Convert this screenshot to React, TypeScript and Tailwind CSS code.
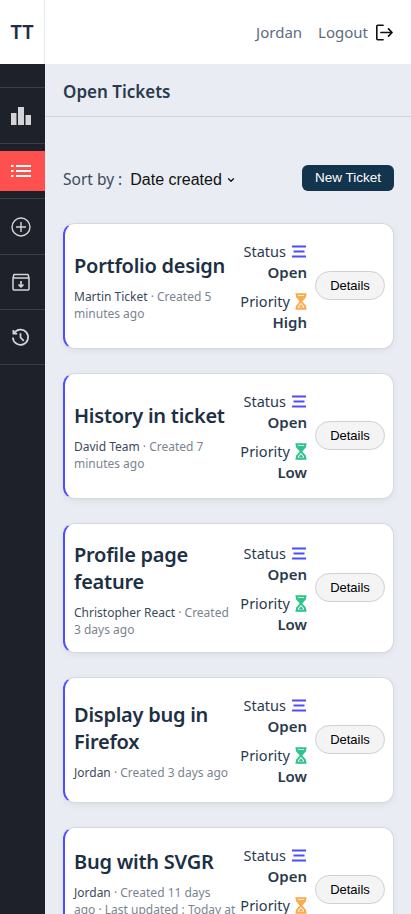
import { ChevronDown } from 'lucide-react'

const tickets = [
  { title: 'Portfolio design', author: 'Martin Ticket', meta: ' · Created 5 minutes ago', priority: 'High', h: 'h-[126px]' },
  { title: 'History in ticket', author: 'David Team', meta: ' · Created 7 minutes ago', priority: 'Low', h: 'h-[126px]' },
  { title: 'Profile page feature', author: 'Christopher React', meta: ' · Created 3 days ago', priority: 'Low', h: 'h-[130px]' },
  { title: 'Display bug in Firefox', author: 'Jordan', meta: ' · Created 3 days ago', priority: 'Low', h: 'h-[126px]' },
  { title: 'Bug with SVGR', author: 'Jordan', meta: ' · Created 11 days\nago · Last updated : Today at\n10:12', priority: 'High', h: 'h-[126px]' },
]

function BarsIcon() {
  return (
    <svg viewBox="0 0 16 13" className="w-4 h-[13px]">
      <path d="M1 1.5h14M2.5 6.5h11M1 11.5h14" stroke="#4d4dff" strokeWidth="2" fill="none" />
    </svg>
  )
}

function HourglassIcon({ color }: { color: string }) {
  return (
    <svg viewBox="0 0 12 17" className="w-3 h-[17px]">
      <path d="M0.5 1.2h11M0.5 15.8h11M2 1.2v2.6l3.8 4.7-3.8 4.7v2.6M10 1.2v2.6L6.2 8.5 10 13.2v2.6" stroke={color} strokeWidth="1.9" fill="none" />
      <path d="M3 3h6v1L6 8 3 4zM3.5 14.5 6 11l2.5 3.5z" fill={color} />
    </svg>
  )
}

function TicketCard({ t }: { t: (typeof tickets)[number] }) {
  const color = t.priority === 'High' ? '#fba94c' : '#2fc18c'
  return (
    <div className={`${t.h} shrink-0 flex items-center bg-white rounded-xl border border-[#d6d8dc] border-l-2 border-l-[#4d4dff] pl-[9px] pr-2 shadow-[0_2px_6px_rgba(0,0,0,0.06)]`}>
      <div className="flex-1 min-w-0 pt-[2px] pr-[2px]">
        <h2 className="text-[20px] leading-[27px] font-semibold tracking-[-0.25px] text-[#1c2f44]">{t.title}</h2>
        <p className="mt-[9px] text-[12px] leading-[17px] text-[#7a8490] whitespace-pre-line">
          <span className="text-[#3d4a5a]">{t.author}</span>
          {t.meta}
        </p>
      </div>
      <div className="w-[68px] shrink-0 pt-[1px] flex flex-col items-end text-[#2a3a4d] whitespace-nowrap">
        <div className="flex items-center gap-[5px] text-[14.5px] leading-[21px]">Status <BarsIcon /></div>
        <div className="text-[15px] leading-[21px] font-semibold">Open</div>
        <div className="mt-[8px] flex items-center gap-[5px] text-[14.5px] leading-[21px]">Priority <HourglassIcon color={color} /></div>
        <div className="text-[15px] leading-[21px] font-semibold">{t.priority}</div>
      </div>
      <button className="ml-2 mb-[1px] w-[70px] h-[29px] shrink-0 rounded-full bg-[#f4f4f5] border border-[#cfd0d3] text-[13px] text-black font-['Liberation_Sans',sans-serif]">
        Details
      </button>
    </div>
  )
}

export default function App() {
  return (
    <div className="h-[914px] overflow-hidden flex flex-col bg-[#e9ecf2] font-['Noto_Sans',sans-serif]">
      <header className="h-16 shrink-0 flex items-center bg-white">
        <div className="w-[45px] h-full flex items-center justify-center border-r border-[#e8e9ec] text-[20px] font-semibold text-[#1c2f44]">TT</div>
        <div className="flex-1 flex items-center justify-end gap-4 pr-[18px] text-[15px] text-[#5d6b7d]">
          <span>Jordan</span>
          <span className="flex items-center gap-[7px]">
            Logout
            <svg viewBox="0 0 20 20" className="w-[18px] h-[19px]" fill="none" stroke="#111" strokeWidth="1.8" strokeLinecap="round" strokeLinejoin="round">
              <path d="M9 2H3a1 1 0 0 0-1 1v14a1 1 0 0 0 1 1h6M6.5 10h12.5M15 6l4 4-4 4" />
            </svg>
          </span>
        </div>
      </header>

      <div className="flex-1 flex min-h-0">
        <nav className="w-[45px] shrink-0 bg-[#1e212a] pt-[23px] text-[#d4d4d8]">
          <div className="h-[56px] flex items-center justify-center pr-1 border-t border-[#3b3e46]">
            <svg viewBox="0 0 20 18" className="w-5 h-[18px]" fill="#d4d4d8">
              <rect x="0" y="6" width="5.5" height="12" />
              <rect x="7" y="0" width="6" height="18" />
              <rect x="14.5" y="8" width="5.5" height="10" />
            </svg>
          </div>
          <div className="h-[55px] border-t border-[#3b3e46] flex items-start pt-[7px]">
            <div className="w-full h-10 bg-[#ff5050] flex items-center justify-center pr-1">
              <svg viewBox="0 0 20 12" className="w-5 h-3" stroke="#fff" strokeWidth="2">
                <path d="M0 1h2.5M5 1h15M0 6h2.5M5 6h15M0 11h2.5M5 11h15" />
              </svg>
            </div>
          </div>
          <div className="h-[56px] flex items-center justify-center pr-1 border-t border-[#3b3e46]">
            <svg viewBox="0 0 20 20" className="w-5 h-5" fill="none" stroke="#d4d4d8" strokeWidth="1.4">
              <circle cx="10" cy="10" r="9" />
              <path d="M10 5v10M5 10h10" />
            </svg>
          </div>
          <div className="h-[55px] flex items-center justify-center pr-1 border-t border-[#3b3e46]">
            <svg viewBox="0 0 18 18" className="w-[18px] h-[18px]" fill="none" stroke="#d4d4d8" strokeWidth="1.5" strokeLinejoin="round">
              <path d="M2 1.5h14l1 3.5v11a1 1 0 0 1-1 1H2a1 1 0 0 1-1-1V5zM1 5h16" />
              <path d="M9 8v6M6.5 11.5 9 14l2.5-2.5" strokeWidth="1.7" />
            </svg>
          </div>
          <div className="h-[56px] flex items-center justify-center pr-1 border-y border-[#3b3e46]">
            <svg viewBox="0 0 20 20" className="w-[19px] h-[19px]" fill="none" stroke="#d4d4d8" strokeWidth="1.8">
              <path d="M3.2 5.5A8 8 0 1 1 2 10" />
              <path d="M2.5 2v4h4" />
              <path d="M10 5.5V10l3.5 3.5" />
            </svg>
          </div>
        </nav>

        <main className="flex-1 min-w-0 flex flex-col">
          <div className="h-[53px] shrink-0 flex items-center pl-[18px] pt-[4px] border-b border-[#d2d5da] text-[17px] font-semibold text-[#2a3a4d]">
            Open Tickets
          </div>
          <div className="flex items-center justify-between pl-[18px] pr-[17px] mt-[48px] mb-8 h-[26px] shrink-0">
            <div className="flex items-center pt-[3px]">
              <span className="text-[15.5px] text-[#3d4a5a]">Sort by :</span>
              <span className="ml-[8px] text-[16px] text-[#111] font-['Liberation_Sans',sans-serif]">Date created</span>
              <ChevronDown className="ml-1 w-2.5 h-2.5 text-[#111]" strokeWidth={3} />
            </div>
            <button className="w-[92px] h-[26px] rounded-md bg-[#12344d] text-white text-[13.5px] font-['Liberation_Sans',sans-serif]">
              New Ticket
            </button>
          </div>
          <div className="flex flex-col gap-6 pl-[18px] pr-[17px]">
            {tickets.map((t) => (
              <TicketCard key={t.title} t={t} />
            ))}
          </div>
        </main>
      </div>
    </div>
  )
}
